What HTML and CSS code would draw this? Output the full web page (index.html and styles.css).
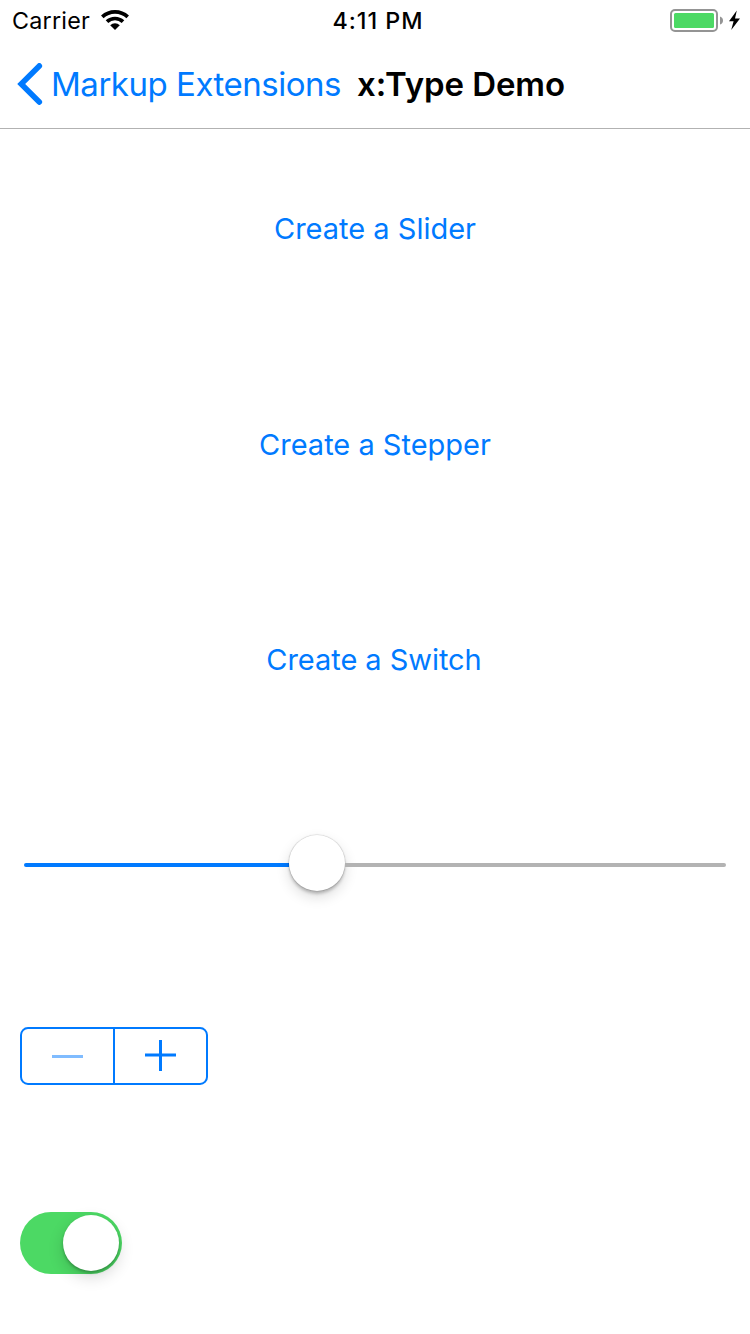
FILE: index.html
```html
<!DOCTYPE html>
<html lang="en">
<head>
<meta charset="utf-8">
<title>x:Type Demo</title>
<link rel="stylesheet" href="styles.css">
</head>
<body>
<header class="status">
  <div class="status-left">
    <span class="carrier">Carrier</span>
    <svg class="wifi" width="28" height="21" viewBox="0 0 28 21">
      <g fill="none" stroke="#000" stroke-width="3.7">
        <path d="M1.3 6.900a18.600 18.600 0 0 1 25.400 0"/>
        <path d="M6 11.700a11.600 11.600 0 0 1 16 0"/>
      </g>
      <path d="M9.200 15.200a7 7 0 0 1 9.600 0L14 20z"/>
    </svg>
  </div>
  <span class="time">4:11 PM</span>
  <svg class="battery" width="72" height="26" viewBox="0 0 72 26">
    <rect x="1" y="3" width="46" height="21" rx="4" fill="#fff" stroke="#949494" stroke-width="2"/>
    <rect x="4" y="6" width="40" height="15" rx="1.5" fill="#4cd964"/>
    <path d="M50 9.5q3 1 3 4t-3 4z" fill="#949494"/>
    <path d="M66.8 3.5L59 14.2h4.6L61.2 23 70 11.6h-5z"/>
  </svg>
</header>
<nav class="nav">
  <svg class="chevron" width="26" height="42" viewBox="0 0 26 42">
    <path d="M22.300 2.900L4.200 21l18.100 18.100" fill="none" stroke="#007aff" stroke-width="5.600" stroke-linecap="round"/>
  </svg>
  <span class="back">Markup Extensions</span>
  <h1 class="title">x:Type Demo</h1>
</nav>
<main class="content">
  <button class="action slider-action"><span>Create a Slider</span></button>
  <button class="action stepper-action"><span>Create a Stepper</span></button>
  <button class="action switch-action"><span>Create a Switch</span></button>
  <div class="row slider-row">
    <div class="track filled"></div>
    <div class="knob"></div>
    <div class="track rest"></div>
  </div>
  <div class="row stepper-row">
    <svg width="188" height="58" viewBox="0 0 188 58">
      <rect x="1" y="1.1" width="186" height="55.8" rx="7" fill="none" stroke="#007aff" stroke-width="2"/>
      <path d="M94 1v56" stroke="#007aff" stroke-width="2"/>
      <path d="M32 29.5h31" stroke="#80bcff" stroke-width="3"/>
      <path d="M125 28h31M140.5 13v31" stroke="#007aff" stroke-width="3"/>
    </svg>
  </div>
  <div class="row switch-row">
    <div class="switch"><div class="knob switch-knob"></div></div>
  </div>
</main>
</body>
</html>
```
FILE: styles.css
```css
* { box-sizing: border-box; }
body {
  margin: 0;
  width: 750px;
  height: 1334px;
  overflow: hidden;
  background: #fff;
  color: #000;
  font-family: Inter, "Liberation Sans", sans-serif;
}
.status {
  display: grid;
  grid-template-columns: 1fr auto 1fr;
  height: 40px;
  padding: 0 8px 0 12px;
  line-height: 42px;
  font-size: 23.3px;
}
.status-left { display: flex; }
.carrier { width: 89px; letter-spacing: 0.25px; }
.wifi { margin-top: 10px; }
.time { margin-left: 2px; font-weight: 500; letter-spacing: 1px; }
.battery { justify-self: end; margin-top: 7px; }
.nav {
  display: flex;
  align-items: center;
  height: 89px;
  padding-left: 17px;
  border-bottom: 1px solid #b2b2b2;
  line-height: 88px;
  font-size: 33px;
  white-space: nowrap;
}
.chevron { flex: none; margin-right: 8px; }
.back { width: 306px; color: #007aff; letter-spacing: -0.48px; }
.title { margin: 0; font-size: 33px; font-weight: 600; letter-spacing: -0.08px; }
.content { display: flex; flex-direction: column; gap: 16px; }
.action {
  height: 200px;
  padding: 0 0 2px;
  border: 0;
  background: none;
  color: #007aff;
  font: 29px Inter, "Liberation Sans", sans-serif;
}
.switch-action { padding: 0 2px 3px 0; letter-spacing: -0.05px; }
.row { display: flex; align-items: center; padding: 0 20px; }
.slider-row { height: 172px; padding: 0 24px; }
.track { height: 4px; margin-top: 4px; }
.filled { width: 265px; border-radius: 2px 0 0 2px; background: #007aff; }
.rest { flex: 1; border-radius: 0 2px 2px 0; background: #b3b3b3; }
.knob {
  flex: none;
  width: 56px;
  height: 56px;
  border-radius: 50%;
  background: #fff;
  box-shadow: 0 0 1px 0.5px rgba(0,0,0,.17), 0 3px 3px rgba(0,0,0,.2), 0 6px 14px rgba(0,0,0,.14);
}
.stepper-row { height: 182px; }
.switch-row { height: 160px; }
.switch {
  display: flex;
  justify-content: flex-end;
  align-items: center;
  width: 102px;
  height: 62px;
  padding-right: 3px;
  border-radius: 31px;
  background: #4cd964;
}
.switch-knob { box-shadow: 0 2px 3px rgba(0,0,0,.25), 0 6px 16px rgba(0,0,0,.16); }
```
